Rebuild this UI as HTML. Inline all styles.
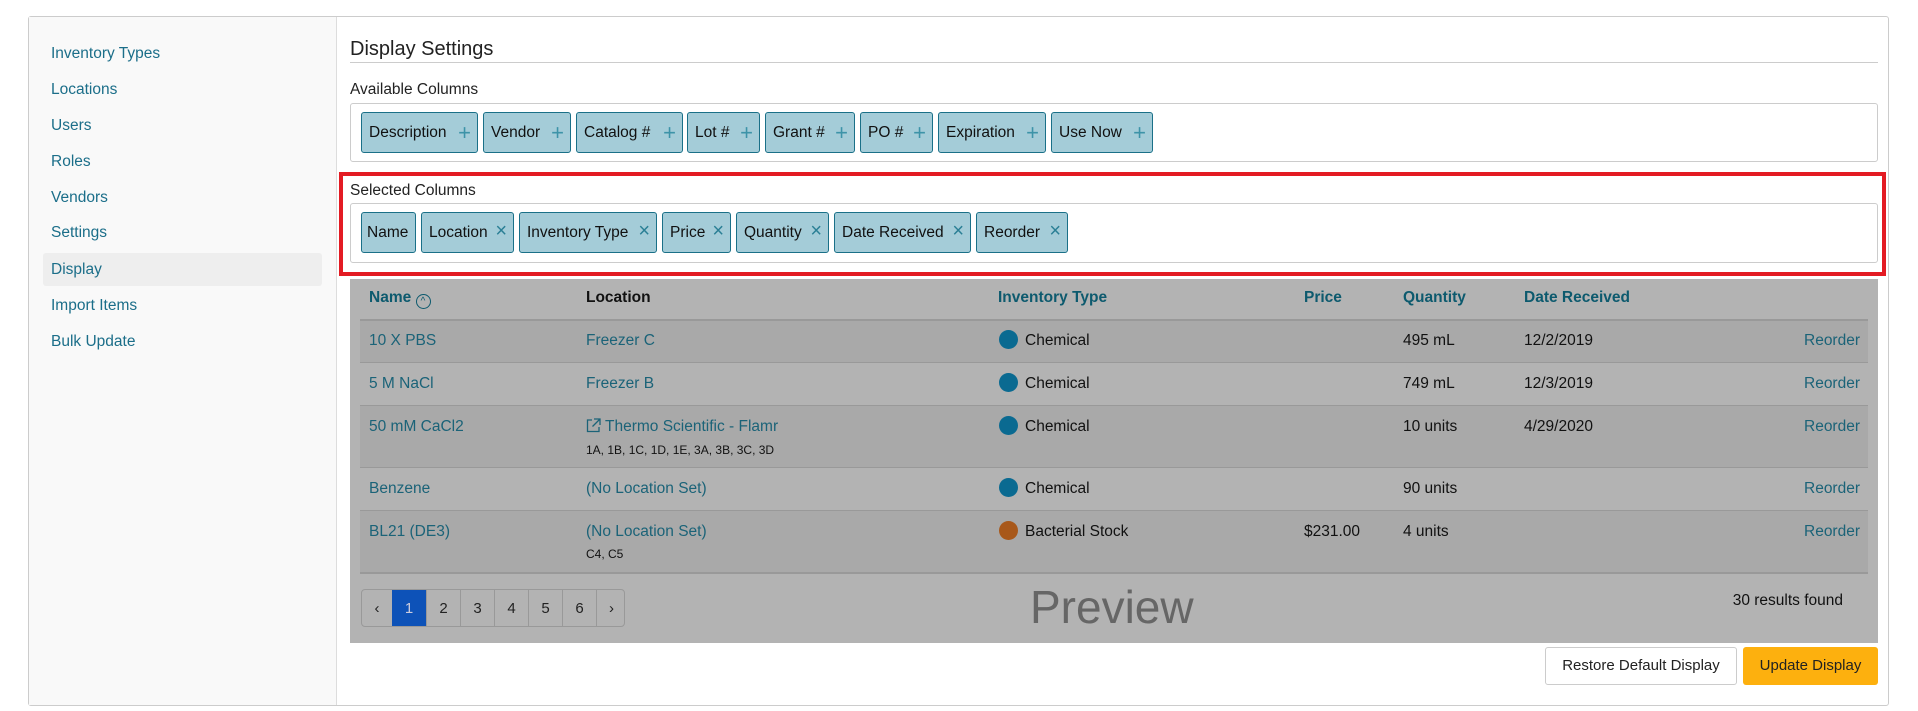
<!DOCTYPE html>
<html><head><meta charset="utf-8"><style>
*{box-sizing:border-box;margin:0;padding:0}
body{width:1918px;height:711px;background:#fff;font-family:"Liberation Sans",Arial,sans-serif;font-size:15px;color:#222;position:relative;overflow:hidden}
.a{position:absolute;white-space:nowrap}
.outer{left:28px;top:16px;width:1861px;height:690px;border:1px solid #ccc;border-radius:3px}
.side{left:29px;top:17px;width:308px;height:688px;background:#f9f9f9;border-right:1px solid #ddd}
.lnk{color:#1b6e89;font-size:15.5px;left:51px}
.chip{position:absolute;height:41px;background:#a4ccd8;border:1px solid #1a7088;border-radius:3px;font-size:15.5px;color:#111;line-height:39px;padding-left:7px}
.chip i{font-style:normal;position:absolute;right:6px;top:0;color:#3d93a8;font-size:22px}
.chip b{font-weight:normal;position:absolute;right:6px;top:-1px;color:#2a7f95;font-size:20px}
.box{left:350px;width:1528px;border:1px solid #ccc;border-radius:3px;background:#fff}
.row{left:360px;width:1508px;border-top:2px solid #999}
.t{color:#1b6378;font-size:15.5px}
.k{color:#111;font-size:15.5px}
.s{color:#111;font-size:12px}
.dot{width:19px;height:19px;border-radius:50%;background:#0a6a91}
.th{font-weight:bold;color:#0d5a6e;font-size:15.5px;top:289px}
.pg{position:absolute;top:0;height:38px;width:34px;border-left:1px solid #999;text-align:center;line-height:38px;font-size:15px;color:#222}
</style></head><body>
<div class="a outer"></div>
<div class="a side"></div>
<div class="a" style="left:43px;top:253px;width:279px;height:33px;background:#eee;border-radius:3px"></div>
<div class="a lnk" style="top:45px">Inventory Types</div>
<div class="a lnk" style="top:81px">Locations</div>
<div class="a lnk" style="top:117px">Users</div>
<div class="a lnk" style="top:153px">Roles</div>
<div class="a lnk" style="top:189px">Vendors</div>
<div class="a lnk" style="top:224px">Settings</div>
<div class="a lnk" style="top:261px">Display</div>
<div class="a lnk" style="top:297px">Import Items</div>
<div class="a lnk" style="top:333px">Bulk Update</div>

<div class="a" style="left:350px;top:38px;font-size:20px;color:#222">Display Settings</div>
<div class="a" style="left:350px;top:62px;width:1528px;height:1px;background:#ccc"></div>
<div class="a" style="left:350px;top:81px;font-size:15.5px;color:#222">Available Columns</div>
<div class="a box" style="top:103px;height:59px"></div>
<div class="chip" style="left:361px;top:112px;width:117px">Description<i>+</i></div>
<div class="chip" style="left:483px;top:112px;width:88px">Vendor<i>+</i></div>
<div class="chip" style="left:576px;top:112px;width:107px">Catalog #<i>+</i></div>
<div class="chip" style="left:687px;top:112px;width:73px">Lot #<i>+</i></div>
<div class="chip" style="left:765px;top:112px;width:90px">Grant #<i>+</i></div>
<div class="chip" style="left:860px;top:112px;width:73px">PO #<i>+</i></div>
<div class="chip" style="left:938px;top:112px;width:108px">Expiration<i>+</i></div>
<div class="chip" style="left:1051px;top:112px;width:102px">Use Now<i>+</i></div>

<div class="a" style="left:339px;top:172px;width:1547px;height:104px;border:4px solid #e31b23"></div>
<div class="a" style="left:350px;top:182px;font-size:15.5px;color:#222">Selected Columns</div>
<div class="a box" style="top:203px;height:60px"></div>
<div class="chip" style="left:361px;top:212px;width:55px;padding-left:5px">Name</div>
<div class="chip" style="left:421px;top:212px;width:93px">Location<b>×</b></div>
<div class="chip" style="left:519px;top:212px;width:138px">Inventory Type<b>×</b></div>
<div class="chip" style="left:662px;top:212px;width:69px">Price<b>×</b></div>
<div class="chip" style="left:736px;top:212px;width:93px">Quantity<b>×</b></div>
<div class="chip" style="left:834px;top:212px;width:137px">Date Received<b>×</b></div>
<div class="chip" style="left:976px;top:212px;width:92px">Reorder<b>×</b></div>

<div class="a" style="left:350px;top:279px;width:1528px;height:364px;background:#b3b3b3"></div>
<div class="a" style="left:360px;top:320px;width:1508px;height:43px;background:#a9a9a9"></div>
<div class="a" style="left:360px;top:406px;width:1508px;height:62px;background:#a9a9a9"></div>
<div class="a" style="left:360px;top:511px;width:1508px;height:61px;background:#a9a9a9"></div>
<div class="a row" style="top:319px"></div>
<div class="a row" style="top:362px;border-top-width:1px"></div>
<div class="a row" style="top:405px;border-top-width:1px"></div>
<div class="a row" style="top:467px;border-top-width:1px"></div>
<div class="a row" style="top:510px;border-top-width:1px"></div>
<div class="a row" style="top:572px"></div>

<div class="a th" style="left:369px">Name <span style="display:inline-block;width:15px;height:15px;border:1.5px solid #0d5a6e;border-radius:50%;vertical-align:-2px;font-size:10px;line-height:13px;text-align:center;font-weight:normal">^</span></div>
<div class="a th" style="left:586px;color:#111">Location</div>
<div class="a th" style="left:998px">Inventory Type</div>
<div class="a th" style="left:1304px">Price</div>
<div class="a th" style="left:1403px">Quantity</div>
<div class="a th" style="left:1524px">Date Received</div>

<div class="a t" style="left:369px;top:332px">10 X PBS</div>
<div class="a t" style="left:586px;top:332px">Freezer C</div>
<div class="a dot" style="left:999px;top:330px"></div><div class="a k" style="left:1025px;top:332px">Chemical</div>
<div class="a k" style="left:1403px;top:332px">495 mL</div><div class="a k" style="left:1524px;top:332px">12/2/2019</div>
<div class="a t" style="right:58px;top:332px">Reorder</div>

<div class="a t" style="left:369px;top:375px">5 M NaCl</div>
<div class="a t" style="left:586px;top:375px">Freezer B</div>
<div class="a dot" style="left:999px;top:373px"></div><div class="a k" style="left:1025px;top:375px">Chemical</div>
<div class="a k" style="left:1403px;top:375px">749 mL</div><div class="a k" style="left:1524px;top:375px">12/3/2019</div>
<div class="a t" style="right:58px;top:375px">Reorder</div>

<div class="a t" style="left:369px;top:418px">50 mM CaCl2</div>
<div class="a t" style="left:586px;top:418px"><svg width="15" height="15" viewBox="0 0 15 15" style="vertical-align:-2px;margin-right:4px"><path d="M6 2H1.5v11.5H13V9M8 1h6v6M14 1L6.5 8.5" fill="none" stroke="#1b6378" stroke-width="1.3"/></svg>Thermo Scientific - Flamr</div>
<div class="a s" style="left:586px;top:443px">1A, 1B, 1C, 1D, 1E, 3A, 3B, 3C, 3D</div>
<div class="a dot" style="left:999px;top:416px"></div><div class="a k" style="left:1025px;top:418px">Chemical</div>
<div class="a k" style="left:1403px;top:418px">10 units</div><div class="a k" style="left:1524px;top:418px">4/29/2020</div>
<div class="a t" style="right:58px;top:418px">Reorder</div>

<div class="a t" style="left:369px;top:480px">Benzene</div>
<div class="a t" style="left:586px;top:480px">(No Location Set)</div>
<div class="a dot" style="left:999px;top:478px"></div><div class="a k" style="left:1025px;top:480px">Chemical</div>
<div class="a k" style="left:1403px;top:480px">90 units</div>
<div class="a t" style="right:58px;top:480px">Reorder</div>

<div class="a t" style="left:369px;top:523px">BL21 (DE3)</div>
<div class="a t" style="left:586px;top:523px">(No Location Set)</div>
<div class="a s" style="left:586px;top:547px">C4, C5</div>
<div class="a dot" style="left:999px;top:521px;background:#a8581a"></div><div class="a k" style="left:1025px;top:523px">Bacterial Stock</div>
<div class="a k" style="left:1304px;top:523px">$231.00</div>
<div class="a k" style="left:1403px;top:523px">4 units</div>
<div class="a t" style="right:58px;top:523px">Reorder</div>

<div class="a" style="left:361px;top:589px;width:264px;height:38px;border:1px solid #999;border-radius:4px;overflow:hidden">
<div class="pg" style="left:0;width:30px;border-left:none">‹</div>
<div class="pg" style="left:30px;background:#0d52b8;color:#ccd;border-left:none">1</div>
<div class="pg" style="left:64px">2</div>
<div class="pg" style="left:98px">3</div>
<div class="pg" style="left:132px">4</div>
<div class="pg" style="left:166px">5</div>
<div class="pg" style="left:200px">6</div>
<div class="pg" style="left:234px;width:30px">›</div>
</div>
<div class="a" style="left:1030px;top:580px;font-size:46px;color:#666">Preview</div>
<div class="a k" style="right:75px;top:592px">30 results found</div>

<div class="a" style="left:1545px;top:647px;width:192px;height:38px;border:1px solid #ccc;border-radius:3px;background:#fff;text-align:center;line-height:36px;font-size:15px;color:#222">Restore Default Display</div>
<div class="a" style="left:1743px;top:647px;width:135px;height:38px;border-radius:3px;background:#fdb00e;text-align:center;line-height:38px;font-size:15px;color:#222">Update Display</div>
</body></html>
